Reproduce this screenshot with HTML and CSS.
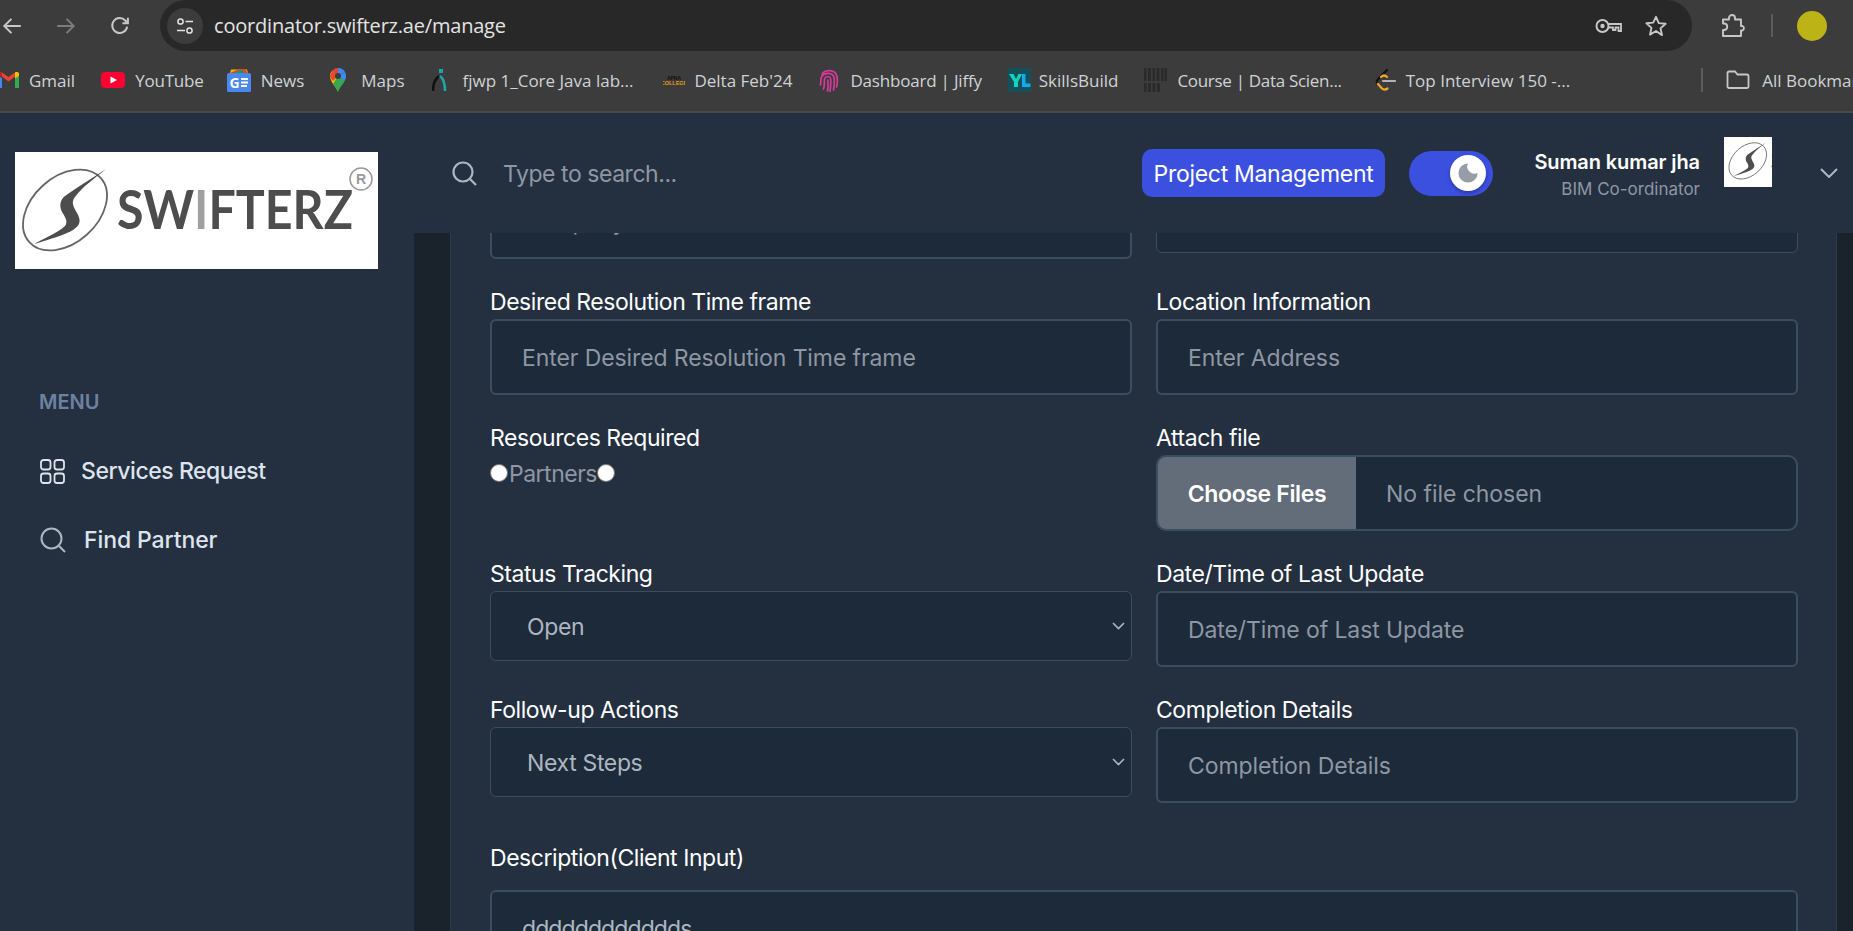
FILE: index.html
```html
<!DOCTYPE html>
<html lang="en">
<head>
<meta charset="utf-8">
<title>Manage | Swifterz</title>
<link rel="stylesheet" href="styles.css">
</head>
<body>
<svg class="defs" width="0" height="0" aria-hidden="true">
  <symbol id="mark" viewBox="0 0 107 117">
    <ellipse cx="50" cy="58" rx="48" ry="33" transform="rotate(-42 50 58)" fill="none" stroke="#666" stroke-width="1.8"/>
    <path d="M91 17 C80 26 67 35 60 45 C56 50 58 54 62 61 C66 68 66 73 58 78 C52 82 30 89 19 92 C30 86 44 80 50 74 C53 70 51 66 47 60 C44 54 45 48 50 44 C62 35 76 27 91 17Z" fill="#4d4d4d"/>
  </symbol>
  <symbol id="chev" viewBox="0 0 13 8">
    <path d="M1 1l5.500 5.500L12 1" fill="none" stroke="#aeb7c0" stroke-width="1.600"/>
  </symbol>
</svg>

<div class="browser">
  <div class="toolbar">
    <div class="nav-icons">
      <svg class="ic ic-back" viewBox="0 0 20 20"><path d="M18 10H3M9.500 3.500 3 10l6.500 6.500" fill="none" stroke="#c7c7c7" stroke-width="1.800"/></svg>
      <svg class="ic ic-forward" viewBox="0 0 20 20"><path d="M2 10h15M10.500 3.500 17 10l-6.500 6.500" fill="none" stroke="#7c7c7c" stroke-width="1.800"/></svg>
      <svg class="ic ic-reload" viewBox="0 0 20 20"><path d="M16.500 10.500A6.800 6.800 0 1 1 14.800 5L17 7.300M17.200 2.500v5h-5" fill="none" stroke="#c7c7c7" stroke-width="1.800"/></svg>
    </div>
    <div class="omnibox">
      <span class="site-info">
        <svg viewBox="0 0 20 20" width="20" height="20"><circle cx="5.500" cy="5.500" r="2.600" fill="none" stroke="#e3e3e3" stroke-width="1.500"/><path d="M10.500 5.500H18M2 14.500h8" stroke="#e3e3e3" stroke-width="1.500"/><circle cx="14.500" cy="14.500" r="2.600" fill="none" stroke="#e3e3e3" stroke-width="1.500"/></svg>
      </span>
      <span class="url">coordinator.swifterz.ae/manage</span>
      <svg class="ic-key" viewBox="0 0 27 18" width="27" height="18"><circle cx="7.500" cy="9" r="6" fill="none" stroke="#c7c7c7" stroke-width="2"/><circle cx="7.500" cy="9" r="2.200" fill="#c7c7c7"/><path d="M13.500 7H26v7h-2.500v-3.500h-3V13h-2.500v-2.500h-4.500" fill="none" stroke="#c7c7c7" stroke-width="1.800"/></svg>
      <svg class="ic-star" viewBox="0 0 24 24" width="24" height="24"><path d="M12 2.800l2.800 6.300 6.800.7-5.100 4.600 1.500 6.700L12 17l-6 3.600 1.500-6.700-5.100-4.600 6.800-.7z" fill="none" stroke="#c7c7c7" stroke-width="1.900" stroke-linejoin="round"/></svg>
    </div>
    <svg class="ic-puzzle" viewBox="0 0 24 24" width="24" height="24"><path d="M2 5.500h6V4a3 3 0 0 1 6 0v1.500h6v6.500h1.500a2.500 2.500 0 0 1 0 4.500H20V22H2v-6h1.500a3.300 3.300 0 0 0 0-6.500H2z" fill="none" stroke="#c7c7c7" stroke-width="1.900" stroke-linejoin="round"/></svg>
    <span class="tool-sep"></span>
    <span class="profile"></span>
  </div>

  <div class="bookmarks">
    <a class="bm bm-gmail">
      <svg viewBox="0 0 21 16" width="21" height="16"><path d="M0 4v12h4V6z" fill="#4285f4"/><path d="M17 6v10h4V4z" fill="#34a853"/><path d="M0 1.500 10.500 9.500 21 1.500 17 .5 10.500 5 4 .5z" fill="#ea4335"/><path d="M0 4V1.500C0 .5 2 -.5 4 .5v4z" fill="#c5221f"/><path d="M17 .5c2-1 4 0 4 1V4l-4 2.500z" fill="#fbbc04"/></svg>
      <span>Gmail</span>
    </a>
    <a class="bm bm-youtube">
      <svg viewBox="0 0 24 16" width="24" height="16"><rect width="24" height="16" rx="4" fill="#ff0033"/><path d="M9.500 4.500 16 8l-6.500 3.500z" fill="#fff"/></svg>
      <span>YouTube</span>
    </a>
    <a class="bm bm-news">
      <svg viewBox="0 0 24 24" width="24" height="24"><path d="M3 5 4 1.500h16L21 5z" fill="#f4b400"/><path d="M3 5 12 1h6l3 4z" fill="#d9482b"/><path d="M7 5l7-3 4 3z" fill="#0f9d58"/><rect y="5" width="24" height="19" rx="1.500" fill="#4a88ee"/><text x="2.500" y="20" class="news-g">G</text><path d="M14 11h7M14 14.500h7M14 18h6" stroke="#fff" stroke-width="1.800"/></svg>
      <span>News</span>
    </a>
    <a class="bm bm-maps">
      <svg viewBox="0 0 16 24" width="16" height="24"><path d="M8 24C6.500 19 0 14 0 8a8 8 0 0 1 2.300-5.600L8 8z" fill="#fbbc04"/><path d="M8 24c-.8-2.500-3-5.300-5-8L8 8l8 0c0 6-6.500 11-8 16z" fill="#34a853"/><path d="M2.300 2.400A8 8 0 0 1 8 0v8L3 13C1 11 0 9.500 0 8z" fill="#ea4335" opacity=".95"/><path d="M8 0a8 8 0 0 1 7 4L8 8z" fill="#4285f4"/><path d="M15 4a8 8 0 0 1 1 4c0 1.500-.6 3-1.500 4.500L8 8z" fill="#4285f4"/><circle cx="8" cy="8" r="3" fill="#3c3c3c"/></svg>
      <span>Maps</span>
    </a>
    <a class="bm bm-fjwp">
      <svg viewBox="0 0 15 22" width="15" height="22"><rect x="7" y="0" width="4" height="4" fill="#19a7a7"/><path d="M1 22c0-7 2-12 6-15" fill="none" stroke="#111" stroke-width="2.600"/><path d="M8 7c4 3 5 8 5 15" fill="none" stroke="#19a7a7" stroke-width="2.600"/></svg>
      <span>fjwp 1_Core Java lab...</span>
    </a>
    <a class="bm bm-delta">
      <svg viewBox="0 0 22 11" width="22" height="11"><text x="11" y="4.600" class="apna a1">APNA</text><text x="11" y="10" class="apna a2">COLLEGE</text></svg>
      <span>Delta Feb'24</span>
    </a>
    <a class="bm bm-jiffy">
      <svg viewBox="0 0 20 24" width="20" height="24" fill="none" stroke="#d63a9a" stroke-width="1.700" stroke-linecap="round"><path d="M3 6.500C5 2 14 1 17 6c1.500 3 1.500 9 .5 13"/><path d="M1.500 17c.8-4-.5-6 1.500-9C5 5 12 3.800 14.500 8c1.500 3 1 8 0 14"/><path d="M4.500 21c1.500-4 .5-7 1-10 .7-3 5-3.500 6-.5.7 3 .3 7-.5 13"/><path d="M8.500 23c1-4 .5-7 .3-11"/></svg>
      <span>Dashboard | Jiffy</span>
    </a>
    <a class="bm bm-skills">
      <svg viewBox="0 0 23 24" width="23" height="24"><rect width="23" height="24" fill="#14505a"/><path d="M1 6h4.500l2.500 5 2.500-5H14L10 14v5H6v-5z" fill="#15d1c0"/><path d="M14 6h3.500v9.500H22.500V19H14z" fill="#12a9f0"/></svg>
      <span>SkillsBuild</span>
    </a>
    <a class="bm bm-course">
      <svg viewBox="0 0 23 24" width="23" height="24"><g fill="#2a2a2a"><rect x="0" y="0" width="2.500" height="13"/><rect x="4" y="0" width="3" height="13"/><rect x="8.500" y="0" width="2.500" height="13"/><rect x="12.500" y="0" width="3" height="13"/><rect x="17" y="0" width="2.500" height="13"/><rect x="20.500" y="0" width="2.500" height="13"/><rect x="0" y="15" width="2.500" height="9"/><rect x="4" y="15" width="3" height="9"/><rect x="8.500" y="15" width="3" height="9"/><rect x="13" y="15" width="3" height="9"/></g></svg>
      <span>Course | Data Scien...</span>
    </a>
    <a class="bm bm-leet">
      <svg viewBox="0 0 21 24" width="21" height="24" fill="none" stroke-width="2.200" stroke-linecap="round"><path d="M12 2 2.500 12c-1 1.500-1 2.500 0 3.500" stroke="#111"/><path d="M3 16l3.500 4c2 2 4 2 6 .5" stroke="#f5a623"/><path d="M6 9c2-2 4-2 6 0" stroke="#f5a623"/><path d="M8 13h12" stroke="#b3b3b3"/></svg>
      <span>Top Interview 150 -...</span>
    </a>
    <span class="bm-sep"></span>
    <a class="bm bm-all">
      <svg viewBox="0 0 24 20" width="24" height="20"><path d="M1.500 3a1.500 1.500 0 0 1 1.500-1.500h6l2.500 3H21a1.500 1.500 0 0 1 1.500 1.500v10.500A1.500 1.500 0 0 1 21 18H3a1.500 1.500 0 0 1-1.500-1.500z" fill="none" stroke="#c7c7c7" stroke-width="1.800"/></svg>
      <span>All Bookmarks</span>
    </a>
  </div>
</div>

<div class="app">
  <aside class="sidebar">
    <div class="logo">
      <svg viewBox="0 0 363 117" width="363" height="117">
        <use href="#mark" x="0" y="0" width="107" height="117"/>
        <text x="102" y="77" class="logo-text" textLength="236" lengthAdjust="spacingAndGlyphs">SW<tspan class="logo-i">I</tspan>FTERZ</text>
        <circle cx="346" cy="27" r="11" fill="none" stroke="#999" stroke-width="1.500"/>
        <text x="346" y="32" class="logo-r">R</text>
      </svg>
    </div>
    <h3 class="menu-title">MENU</h3>
    <nav class="menu">
      <a class="menu-item item-services">
        <svg viewBox="0 0 25 25" width="25" height="25" fill="none" stroke="#dee4ee" stroke-width="1.800"><rect x="1" y="1" width="9.500" height="9.500" rx="2.500"/><rect x="14.500" y="1" width="9.500" height="9.500" rx="2.500"/><rect x="1" y="14.500" width="9.500" height="9.500" rx="2.500"/><rect x="14.500" y="14.500" width="9.500" height="9.500" rx="2.500"/></svg>
        <span>Services Request</span>
      </a>
      <a class="menu-item item-find">
        <svg viewBox="0 0 26 26" width="26" height="26" fill="none" stroke="#aeb7c0" stroke-width="2"><circle cx="11.500" cy="11.500" r="10"/><path d="M19 19l6 6"/></svg>
        <span>Find Partner</span>
      </a>
    </nav>
  </aside>

  <div class="main">
    <header class="topbar">
      <div class="search">
        <svg viewBox="0 0 25 25" width="25" height="25" fill="none" stroke="#aeb7c0" stroke-width="2.200"><circle cx="11" cy="11" r="9.500"/><path d="M18 18l6 6"/></svg>
        <span>Type to search...</span>
      </div>
      <a class="project-btn">Project Management</a>
      <div class="toggle"><span class="knob"><svg viewBox="0 0 20 20" width="24" height="24"><path d="M10 2A8 8 0 1 0 18 10 6 6 0 0 1 10 2z" fill="#969ca8"/></svg></span></div>
      <div class="user">
        <strong>Suman kumar jha</strong>
        <small>BIM Co-ordinator</small>
      </div>
      <div class="avatar"><svg viewBox="-3 5 107 111" width="48" height="50"><use href="#mark" x="0" y="0" width="107" height="117"/><text x="101" y="77" class="logo-text">S</text></svg></div>
      <svg class="user-chevron" viewBox="0 0 18 10" width="18" height="10"><path d="M1 1l8 8 8-8" fill="none" stroke="#aeb7c0" stroke-width="2"/></svg>
    </header>

    <div class="content">
      <div class="card">
        <form class="form">
          <div class="field"><label>Company</label><input type="text" placeholder="Company"></div>
          <div class="field"><label>Priority</label><div class="select-wrap"><select><option>Select</option></select><svg class="select-chev" width="13" height="8"><use href="#chev"/></svg></div></div>

          <div class="field"><label>Desired Resolution Time frame</label><input type="text" placeholder="Enter Desired Resolution Time frame"></div>
          <div class="field"><label>Location Information</label><input type="text" placeholder="Enter Address"></div>

          <div class="field"><label>Resources Required</label>
            <div class="radios"><input type="radio" name="res"><span>Partners</span><input type="radio" name="res"></div>
          </div>
          <div class="field"><label>Attach file</label>
            <div class="file"><span class="file-btn">Choose Files</span><span class="file-name">No file chosen</span></div>
          </div>

          <div class="field"><label>Status Tracking</label><div class="select-wrap"><select><option>Open</option></select><svg class="select-chev" width="13" height="8"><use href="#chev"/></svg></div></div>
          <div class="field"><label>Date/Time of Last Update</label><input type="text" placeholder="Date/Time of Last Update"></div>

          <div class="field"><label>Follow-up Actions</label><div class="select-wrap"><select><option>Next Steps</option></select><svg class="select-chev" width="13" height="8"><use href="#chev"/></svg></div></div>
          <div class="field"><label>Completion Details</label><input type="text" placeholder="Completion Details"></div>

          <div class="field field-wide"><label>Description(Client Input)</label><textarea rows="6">dddddddddddds</textarea></div>
        </form>
      </div>
    </div>
  </div>
</div>
</body>
</html>
```

FILE: styles.css
```css
* { box-sizing: border-box; }
html, body { margin: 0; height: 100%; }
body {
  width: 1853px;
  height: 931px;
  overflow: hidden;
  display: flex;
  flex-direction: column;
  background: #1a222c;
  font-family: Inter, "Liberation Sans", sans-serif;
  color: #dee4ee;
}
.defs { position: absolute; }

/* Browser chrome */
.browser { background: #3c3c3c; flex: none; font-family: "Open Sans", "Liberation Sans", sans-serif; }
.toolbar { height: 51px; display: flex; align-items: center; }
.nav-icons { width: 160px; flex: none; display: flex; align-items: center; padding-left: 1px; }
.ic { width: 22px; height: 22px; }
.ic-forward { margin-left: 32px; }
.ic-reload { margin-left: 32px; }
.omnibox {
  width: 1532px;
  height: 51px;
  flex: none;
  display: flex;
  align-items: center;
  background: #282828;
  border-radius: 26px;
  padding: 0 24px 0 7px;
  color: #e3e3e3;
}
.site-info {
  width: 36px; height: 36px; border-radius: 50%;
  background: #3c3c3c;
  display: flex; align-items: center; justify-content: center;
  flex: none;
}
.url { margin-left: 11px; font-size: 20px; flex: 1; letter-spacing: -.2px; }
.ic-key { margin-right: 1px; }
.ic-star { margin-left: 21px; }
.ic-puzzle { margin-left: 29px; flex: none; }
.tool-sep { width: 2px; height: 23px; background: #5c5c5c; margin-left: 26px; flex: none; }
.profile { width: 30px; height: 30px; border-radius: 50%; background: #bcb316; margin-left: 24px; flex: none; }

.bookmarks {
  height: 62px;
  padding: 0 0 2px 0;
  border-bottom: 2px solid #4a4a4a;
  display: flex;
  align-items: center;
  white-space: nowrap;
  overflow: hidden;
  color: #cfd3d6;
  font-size: 17px;
}
.bm { display: inline-flex; align-items: center; gap: 10px; flex: none; }
.bm svg { flex: none; }
.bm-gmail { margin-left: -2px; }
.bm-youtube { margin-left: 26px; letter-spacing: -.2px; }
.bm-news { margin-left: 23px; }
.bm-maps { margin-left: 26px; gap: 15px; }
.bm-fjwp { margin-left: 27px; gap: 16px; }
.bm-delta { margin-left: 30px; gap: 9px; }
.bm-jiffy { margin-left: 27px; gap: 11px; letter-spacing: -.2px; }
.bm-skills { margin-left: 26px; gap: 8px; }
.bm-course { margin-left: 26px; letter-spacing: -.3px; }
.bm-leet { margin-left: 33px; }
.bm-sep { width: 2px; height: 24px; background: #5c5c5c; margin-left: 131px; flex: none; }
.bm-all { margin-left: 23px; gap: 12px; }
.news-g { font: 700 14px "Open Sans", sans-serif; fill: #fff; }
.apna { font: 700 5px "Liberation Sans", sans-serif; text-anchor: middle; }
.a1 { fill: #111; }
.a2 { fill: #e49a13; font-size: 5.500px; }

/* App shell */
.app { flex: 1; min-height: 0; display: flex; }
.sidebar {
  width: 414px;
  flex: none;
  background: #24303f;
  padding: 39px 0 0 15px;
}
.logo { width: 363px; height: 117px; background: #fff; }
.logo svg { display: block; }
.logo-text { font: 700 53px Lato, sans-serif; fill: #4d4d4d; }
.logo-i { fill: #a0a0a0; }
.logo-r { font: 700 14px "Liberation Sans", sans-serif; fill: #999; text-anchor: middle; }
.menu-title {
  margin: 119px 0 0 24px;
  font-size: 20px;
  line-height: 28px;
  font-weight: 600;
  color: #6d82a3;
}
.menu { margin: 0 0 0 25px; display: flex; flex-direction: column; }
.menu-item { display: flex; align-items: center; font-size: 23px; font-weight: 500; color: #dee4ee; height: 30px; }
.item-services { margin-top: 40px; gap: 16px; letter-spacing: -.45px; }
.item-find { margin-top: 39px; gap: 18px; letter-spacing: -.1px; }

.main { flex: 1; min-width: 0; display: flex; flex-direction: column; }
.topbar {
  height: 120px;
  flex: none;
  background: #24303f;
  display: flex;
  align-items: center;
  padding-left: 38px;
}
.search { display: flex; align-items: center; gap: 26px; width: 690px; font-size: 23px; color: #8e97a3; letter-spacing: -.45px; }
.search span { padding-top: 2px; }
.project-btn {
  width: 243px;
  height: 48px;
  background: #3c50e0;
  color: #fff;
  border-radius: 10px;
  display: flex;
  align-items: center;
  justify-content: center;
  padding-top: 2px;
  font-size: 23px;
  letter-spacing: -.3px;
}
.toggle {
  width: 84px; height: 45px; margin-left: 24px;
  background: #3c50e0;
  border-radius: 23px;
  display: flex; align-items: center; justify-content: flex-end;
  padding-right: 7px;
}
.knob {
  width: 36px; height: 36px; border-radius: 50%;
  background: #fff;
  display: flex; align-items: center; justify-content: center;
  box-shadow: 0 2px 4px rgba(0,0,0,.3);
}
.user { width: 207px; display: flex; flex-direction: column; align-items: flex-end; padding-top: 4px; }
.user strong { font-size: 20px; font-weight: 600; color: #fff; line-height: 27px; letter-spacing: -.1px; }
.user small { font-size: 17px; color: #8e97a3; line-height: 25px; margin-top: 1px; }
.avatar { width: 48px; height: 50px; background: #fff; margin-left: 24px; overflow: hidden; align-self: flex-start; margin-top: 24px; }
.avatar svg { display: block; }
.user-chevron { margin-left: 48px; }

.content { flex: 1; min-height: 0; overflow: hidden; background: #1a222c; padding: 0 16px 0 36px; display: flex; }
.card { flex: 1; background: #24303f; border-left: 1px solid #2e3a47; border-right: 1px solid #2e3a47; overflow: hidden; }
.form {
  margin-top: -83px;
  padding: 0 39px;
  display: grid;
  grid-template-columns: 642px 642px;
  column-gap: 24px;
  row-gap: 27px;
  align-items: start;
}
.field { display: flex; flex-direction: column; min-width: 0; }
.field-wide { grid-column: 1 / -1; margin-top: 12px; }
.field label { font-size: 23px; line-height: 30px; padding-top: 1px; height: 31px; margin-bottom: 2px; color: #fff; letter-spacing: -.45px; }
.field-wide label { margin-bottom: 17px; }
.field input[type=text], .field textarea {
  width: 100%;
  height: 76px;
  padding: 2px 30px 0;
  background: #1d2a39;
  border: 2px solid #3d4d60;
  border-radius: 6px;
  color: #aeb7c0;
  font: 400 23px Inter, sans-serif;
  letter-spacing: -.1px;
  outline: none;
}
.field input::placeholder { color: #8e97a3; opacity: 1; }
.field textarea { height: 220px; padding: 23px 30px; display: block; resize: none; letter-spacing: -.9px; }
.select-wrap { position: relative; }
.select-chev { position: absolute; right: 7px; top: 31px; }
.field select {
  appearance: none;
  display: block;
  width: 100%;
  height: 70px;
  padding: 2px 36px 0;
  background: #1d2a39;
  border: 1px solid #3d4d60;
  border-radius: 6px;
  color: #aeb7c0;
  font: 400 23px Inter, sans-serif;
  letter-spacing: -.35px;
}
.radios { display: flex; align-items: center; font-size: 23px; color: #8e97a3; height: 32px; margin-top: 2px; letter-spacing: -.5px; }
.radios input { appearance: none; width: 18px; height: 18px; margin: 0; border-radius: 50%; background: #fff; border: 1px solid #767676; flex: none; }
.radios span { margin: 2px 0 0 1px; }
.file {
  height: 76px;
  display: flex;
  align-items: stretch;
  background: #1d2a39;
  border: 2px solid #3d4d60;
  border-radius: 10px;
  overflow: hidden;
}
.file-btn { width: 198px; background: #636c79; color: #fff; font-size: 23px; font-weight: 600; letter-spacing: -.35px; padding-top: 2px; display: flex; align-items: center; justify-content: center; }
.file-name { padding: 2px 0 0 30px; color: #8e97a3; font-size: 23px; letter-spacing: -.05px; display: flex; align-items: center; }
```
